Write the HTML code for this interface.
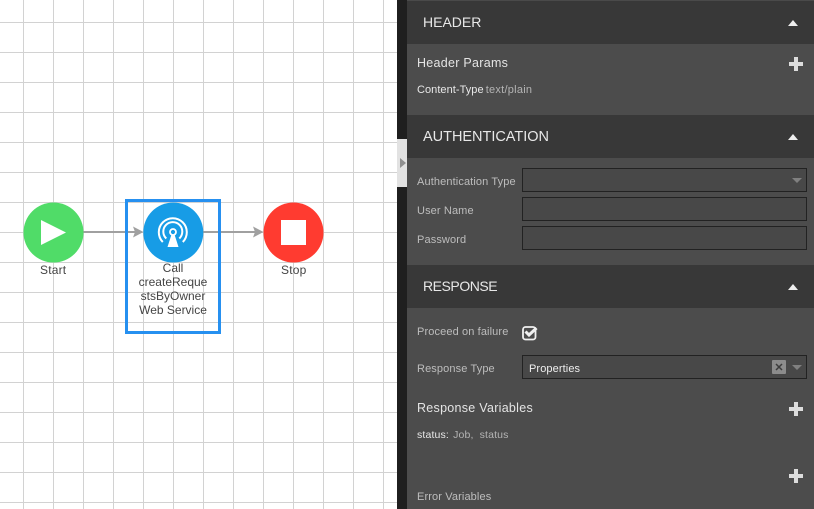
<!DOCTYPE html>
<html><head><meta charset="utf-8">
<style>
html,body{margin:0;padding:0;width:814px;height:509px;overflow:hidden;background:#fff}
body{position:relative;font-family:"Liberation Sans",sans-serif}
.a{position:absolute}
.t{position:absolute;white-space:nowrap;line-height:16px;height:16px}
.h{left:423px;font-size:14.5px;color:#e8e8e8}
.l{left:417px;font-size:11px;color:#bdbdbd;letter-spacing:.12px}
.s{left:417px;font-size:12.5px;color:#e4e4e4;letter-spacing:.28px}
.i{position:absolute;left:522px;width:283px;height:22px;border:1px solid #222;background:#484848}
</style></head><body>
<svg class="a" style="left:0;top:0" width="397" height="509" viewBox="0 0 397 509">
<defs><pattern id="g" x="23" y="22" width="30" height="30" patternUnits="userSpaceOnUse"><path d="M.5 0V30M0 .5H30" stroke="#d2d2d2" stroke-width="1" fill="none"/></pattern></defs>
<rect width="397" height="509" fill="#fff"/>
<rect width="397" height="509" fill="url(#g)"/>
<path d="M83 232H137M203 232H257" stroke="#a0a0a0" stroke-width="2" fill="none"/>
<path d="M133 226.500L143.500 232L133 237.500L135 232Z M253 226.500L263.500 232L253 237.500L255 232Z" fill="#a0a0a0"/>
<circle cx="53.500" cy="232.500" r="30" fill="#50dc68"/>
<path d="M41 220V245L66 232.500Z" fill="#fff"/>
<circle cx="173.300" cy="232.500" r="30" fill="#179ce6"/>
<g fill="none" stroke="#fff">
<path d="M162.800 242A14 14 0 1 1 182.800 242" stroke-width="2"/>
<path d="M166.300 238.500A9.500 9.500 0 1 1 179.300 238.500" stroke-width="2"/>
<circle cx="173" cy="232" r="3" stroke-width="1.800"/>
</g>
<path d="M171.500 234.500H174.500L178.500 247H167.500Z" fill="#fff"/>
<circle cx="293.500" cy="232.500" r="30" fill="#ff3b30"/>
<rect x="281" y="220" width="25" height="25" fill="#fff"/>
<rect x="126.500" y="200.500" width="93" height="132" fill="none" stroke="#2690f0" stroke-width="3"/>
</svg>
<div class="t" style="left:40px;top:262px;font-size:12px;color:#444;letter-spacing:.2px">Start</div>
<div class="t" style="left:125px;width:96px;text-align:center;top:261px;font-size:12px;color:#444;line-height:14px;height:56px;letter-spacing:0">Call<br>createReque<br>stsByOwner<br>Web Service</div>
<div class="t" style="left:281px;top:262px;font-size:12px;color:#444;letter-spacing:.2px">Stop</div>

<div class="a" style="left:397px;top:0;width:10px;height:509px;background:#1f1f1f"></div>
<div class="a" style="left:397px;top:139px;width:10px;height:48px;background:#e2e2e2"></div>
<div class="a" style="left:400px;top:158px;width:0;height:0;border-left:6px solid #8f8f8f;border-top:5px solid transparent;border-bottom:5px solid transparent"></div>
<div class="a" style="left:407px;top:0;width:407px;height:509px;background:#4c4c4c"></div>
<div class="a" style="left:407px;top:0;width:407px;height:1px;background:#4a4a4a"></div>
<div class="a" style="left:407px;top:1px;width:407px;height:43px;background:#383838"></div>
<div class="a" style="left:407px;top:115px;width:407px;height:43px;background:#383838"></div>
<div class="a" style="left:407px;top:265px;width:407px;height:43px;background:#383838"></div>

<div class="t h" style="top:14px;font-size:14px;letter-spacing:0">HEADER</div>
<div class="t h" style="top:129px;letter-spacing:-.02px">AUTHENTICATION</div>
<div class="t h" style="top:278px;font-size:14px;letter-spacing:-.45px">RESPONSE</div>
<div class="a" style="left:788px;top:20px;width:0;height:0;border-left:5px solid transparent;border-right:5px solid transparent;border-bottom:6px solid #eee"></div>
<div class="a" style="left:788px;top:134px;width:0;height:0;border-left:5px solid transparent;border-right:5px solid transparent;border-bottom:6px solid #eee"></div>
<div class="a" style="left:788px;top:284px;width:0;height:0;border-left:5px solid transparent;border-right:5px solid transparent;border-bottom:6px solid #eee"></div>

<div class="t s" style="top:55px">Header Params</div>
<svg class="a" style="left:789px;top:57px" width="14" height="14"><path d="M5 0H9V5H14V9H9V14H5V9H0V5H5Z" fill="#dcdcdc"/></svg>
<div class="t" style="left:417px;top:82px;font-size:11px;color:#e8e8e8;letter-spacing:.05px">Content-Type <span style="color:#b4b4b4;margin-left:-1px;letter-spacing:.25px">text/plain</span></div>

<div class="t l" style="top:174px">Authentication Type</div>
<div class="i" style="top:168px"></div>
<div class="a" style="left:792px;top:178px;width:0;height:0;border-left:5px solid transparent;border-right:5px solid transparent;border-top:5px solid #808080"></div>
<div class="t l" style="top:203px">User Name</div>
<div class="i" style="top:197px"></div>
<div class="t l" style="top:232px">Password</div>
<div class="i" style="top:226px"></div>

<div class="t l" style="top:324px">Proceed on failure</div>
<svg class="a" style="left:522px;top:325px" width="17" height="16"><rect x="1" y="2" width="12.500" height="12.500" rx="2.500" fill="none" stroke="#f0f0f0" stroke-width="1.800"/><path d="M3.500 6.500L7 10L14.500 3" fill="none" stroke="#f0f0f0" stroke-width="3"/></svg>
<div class="t l" style="top:361px">Response Type</div>
<div class="i" style="top:355px"></div>
<div class="t" style="left:529px;top:361px;font-size:11px;color:#eee;letter-spacing:.1px">Properties</div>
<div class="a" style="left:772px;top:360px;width:14px;height:14px;background:#8c8c8c;border-radius:1px"></div>
<svg class="a" style="left:772px;top:360px" width="14" height="14"><path d="M4 4L10 10M10 4L4 10" stroke="#3c3c3c" stroke-width="1.500"/></svg>
<div class="a" style="left:792px;top:365px;width:0;height:0;border-left:5px solid transparent;border-right:5px solid transparent;border-top:5px solid #808080"></div>

<div class="t s" style="top:400px">Response Variables</div>
<svg class="a" style="left:789px;top:402px" width="14" height="14"><path d="M5 0H9V5H14V9H9V14H5V9H0V5H5Z" fill="#dcdcdc"/></svg>
<div class="t" style="left:417px;top:427px;font-size:10.500px;color:#e8e8e8;letter-spacing:.15px">status: <span style="color:#b4b4b4;margin-left:1px">Job,&nbsp; status</span></div>
<svg class="a" style="left:789px;top:469px" width="14" height="14"><path d="M5 0H9V5H14V9H9V14H5V9H0V5H5Z" fill="#dcdcdc"/></svg>
<div class="t l" style="top:489px">Error Variables</div>
</body></html>
